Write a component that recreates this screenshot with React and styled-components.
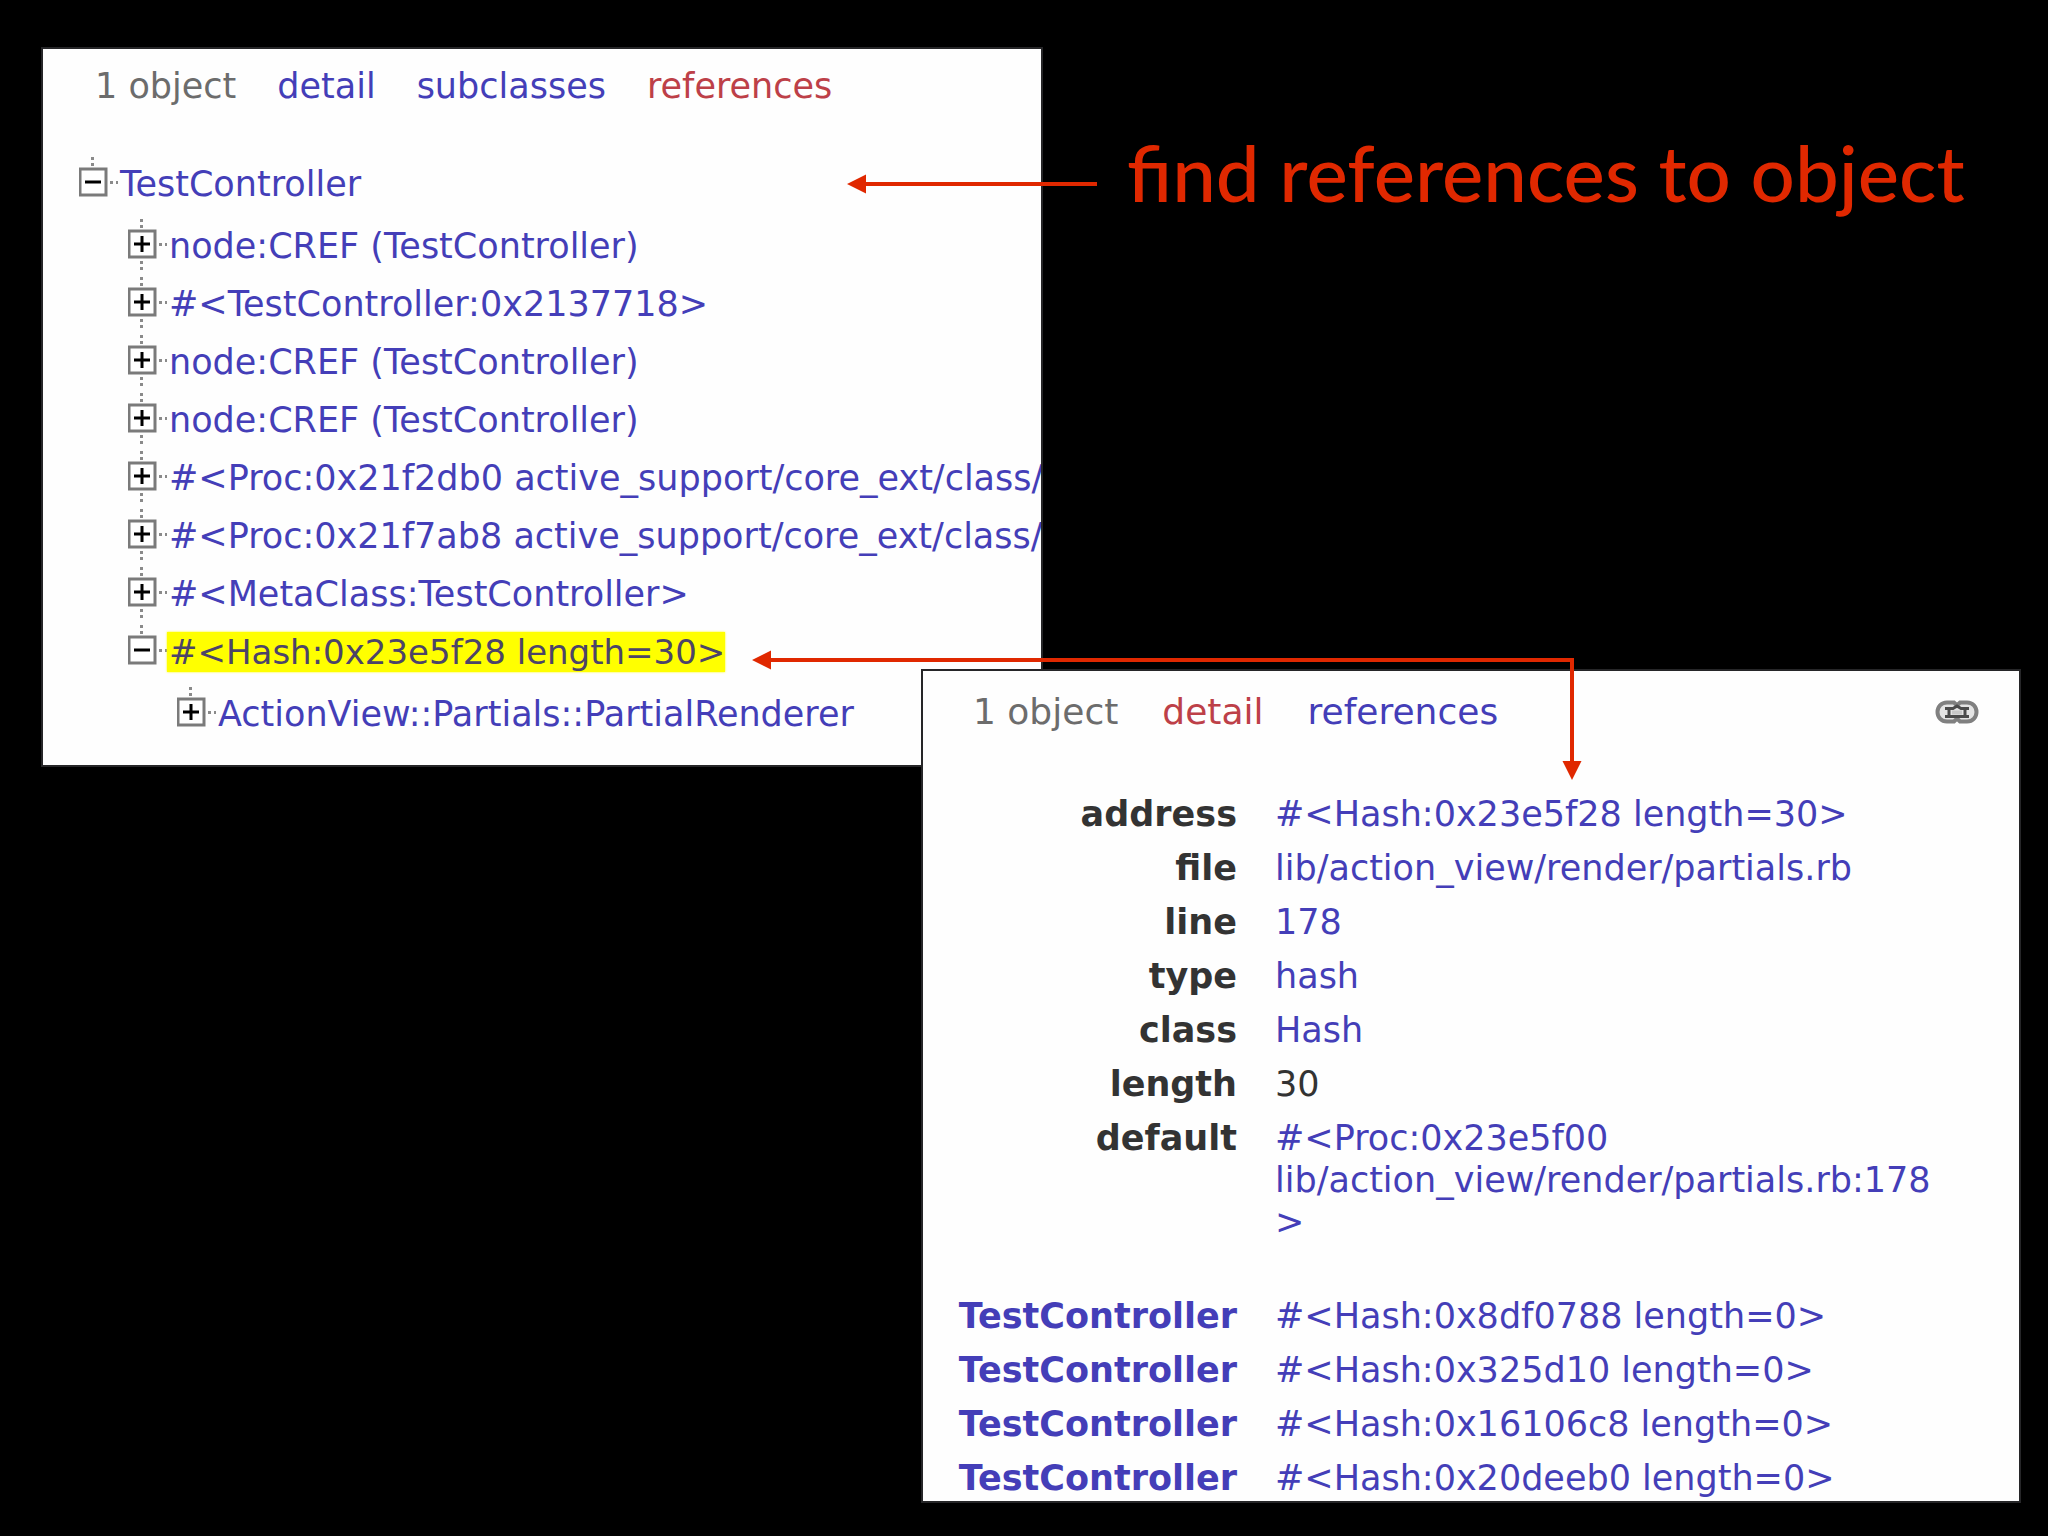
import React from 'react';
import styled, { createGlobalStyle } from 'styled-components';

const treeRows = [
  { label: 'node:CREF (TestController)' },
  { label: '#<TestController:0x2137718>' },
  { label: 'node:CREF (TestController)' },
  { label: 'node:CREF (TestController)' },
  { label: '#<Proc:0x21f2db0 active_support/core_ext/class/' },
  { label: '#<Proc:0x21f7ab8 active_support/core_ext/class/' },
  { label: '#<MetaClass:TestController>' },
  {
    label: '#<Hash:0x23e5f28 length=30>',
    open: true,
    marked: true,
    children: [{ label: 'ActionView::Partials::PartialRenderer' }],
  },
];

const tree = [{ label: 'TestController', open: true, children: treeRows }];

const details = [
  { name: 'address', value: '#<Hash:0x23e5f28 length=30>' },
  { name: 'file', value: 'lib/action_view/render/partials.rb' },
  { name: 'line', value: '178' },
  { name: 'type', value: 'hash' },
  { name: 'class', value: 'Hash' },
  { name: 'length', value: '30', plain: true },
  { name: 'default', value: '#<Proc:0x23e5f00\nlib/action_view/render/partials.rb:178\n>' },
];

const entries = [
  '#<Hash:0x8df0788 length=0>',
  '#<Hash:0x325d10 length=0>',
  '#<Hash:0x16106c8 length=0>',
  '#<Hash:0x20deeb0 length=0>',
];

function ToggleIcon({ open, last }) {
  return (
    <svg width="39" height="58" viewBox="0 0 39 58" aria-hidden="true">
      <g fill="#8a8a8a">
        <rect x="12" y="2" width="3" height="3" />
        <rect x="12" y="8" width="3" height="3" />
        <rect x="31" y="26" width="3" height="3" />
        <rect x="37" y="26" width="2" height="3" />
        {!last && <rect x="12" y="44" width="3" height="3" />}
        {!last && <rect x="12" y="50" width="3" height="3" />}
      </g>
      <rect x="1" y="14" width="26" height="26" fill="#fff" stroke="#7a7a7a" strokeWidth="3" />
      <path d={open ? 'M6 27h16' : 'M6 27h16M14 19v16'} stroke="#000" strokeWidth="3" />
    </svg>
  );
}

function LinkIcon() {
  return (
    <svg width="44" height="24" viewBox="0 0 44 24" fill="none" aria-hidden="true">
      <path
        d="M19 2.500H12C6 2.500 2.500 7 2.500 12S6 21.500 12 21.500H19L22 18.500L25 21.500H32C38 21.500 41.500 17 41.500 12S38 2.500 32 2.500H25L22 5.500Z"
        fill="#e4e4e4"
        stroke="#808080"
        strokeWidth="4"
      />
      <path d="M10 8.500H18L22 6L26 8.500H34M10 16.500H34M14 8V16M30 8V16" stroke="#4c4c4c" strokeWidth="3" />
      <path d="M17 12.500H27" stroke="#c8c8c8" strokeWidth="4" />
    </svg>
  );
}

function Branch({ nodes }) {
  return (
    <BranchList>
      {nodes.map((node, i) => (
        <li key={i}>
          <TreeRow>
            <ToggleButton type="button" aria-expanded={!!node.open} aria-label={`Toggle ${node.label}`}>
              <ToggleIcon open={node.open} last={i === nodes.length - 1} />
            </ToggleButton>
            <NodeLink href="#" $marked={node.marked}>{node.label}</NodeLink>
          </TreeRow>
          {node.children && <Branch nodes={node.children} />}
        </li>
      ))}
    </BranchList>
  );
}

function App() {
  return (
    <Slide>
      <GlobalStyle />

      <TreePanel>
        <Tabs>
          <Count>1 object</Count>
          <Tab href="#">detail</Tab>
          <Tab href="#">subclasses</Tab>
          <Tab href="#" $active>references</Tab>
        </Tabs>
        <Tree>
          <Branch nodes={tree} />
        </Tree>
      </TreePanel>

      <Caption>find references to object</Caption>

      <DetailPanel>
        <Tabs $large>
          <Count>1 object</Count>
          <Tab href="#" $active>detail</Tab>
          <Tab href="#">references</Tab>
          <Permalink href="#" aria-label="Permalink">
            <LinkIcon />
          </Permalink>
        </Tabs>
        <DetailTable>
          <tbody>
            {details.map(({ name, value, plain }) => (
              <tr key={name}>
                <Name scope="row">{name}</Name>
                <Value>{plain ? value : <TextLink href="#">{value}</TextLink>}</Value>
              </tr>
            ))}
          </tbody>
          <Entries>
            {entries.map(entry => (
              <tr key={entry}>
                <Name scope="row"><TextLink href="#">TestController</TextLink></Name>
                <Value><TextLink href="#">{entry}</TextLink></Value>
              </tr>
            ))}
          </Entries>
        </DetailTable>
      </DetailPanel>

      <Arrows viewBox="0 0 2048 1536" preserveAspectRatio="none" aria-hidden="true">
        <path d="M1097 184H864M770 660H1572V763" fill="none" stroke="#e02800" strokeWidth="4" />
        <path d="M847 184L866 174.500V193.500ZM752 660L771 650.500V669.500ZM1572 780L1562.500 761H1581.500Z" fill="#e02800" />
      </Arrows>
    </Slide>
  );
}

export default App;


// Styled Components
const GlobalStyle = createGlobalStyle`
  body {
    margin: 0;
    background: #000;
  }

  * {
    box-sizing: border-box;
  }
`;

const Slide = styled.main`
  position: relative;
  display: grid;
  grid-template-columns: 41fr 880fr 122fr 978fr 27fr;
  grid-template-rows: 47fr 622fr 98fr 736fr 33fr;
  min-height: 100vh;
  background: #000;
  color: #333;
  font-family: 'DejaVu Sans', Verdana, sans-serif;
  font-size: 35px;
`;

const Panel = styled.section`
  overflow: hidden;
  border: 2px solid #262628;
  background: #fefefe;
`;

const TreePanel = styled(Panel)`
  grid-area: 2 / 2 / 4 / 4;
  padding: 17px 0 0 36px;
`;

const DetailPanel = styled(Panel)`
  grid-area: 3 / 3 / 5 / 5;
  padding: 21px 40px 0 34px;
`;

const Tabs = styled.nav`
  display: flex;
  align-items: center;
  gap: ${({ $large }) => ($large ? '44px' : '41px')};
  padding-left: 16px;
  font-size: ${({ $large }) => ($large ? '36px' : '35px')};
  line-height: 40px;
`;

const Count = styled.span`
  color: #6c6c6c;
`;

const TextLink = styled.a`
  color: #443eb8;
  text-decoration: none;
`;

const Tab = styled(TextLink)`
  color: ${({ $active }) => ($active ? '#bd4048' : '#443eb8')};
`;

const Permalink = styled.a`
  display: flex;
  margin-left: auto;
`;

const BranchList = styled.ul`
  margin: 0;
  padding: 0;
  list-style: none;

  & & {
    margin-top: 4px;
    padding-left: 49px;
  }
`;

const Tree = styled.div`
  margin-top: 49px;
`;

const TreeRow = styled.div`
  display: flex;
  align-items: center;
  height: 58px;
  white-space: nowrap;
`;

const ToggleButton = styled.button`
  display: flex;
  flex: none;
  padding: 0;
  border: none;
  background: none;
  cursor: pointer;
`;

const NodeLink = styled(TextLink)`
  padding-left: 2px;
  line-height: 40px;
  ${({ $marked }) => $marked && `
    background: #ff0;
    color: #4c4468;
    font-size: 34px;
    box-shadow: 0 0 2px #ff0;
  `}
`;

const Caption = styled.h1`
  grid-area: 1 / 4 / 3 / 6;
  margin: 0;
  padding: 122px 0 0 84px;
  color: #e02800;
  font-family: Lato, sans-serif;
  font-size: 78px;
  font-weight: 500;
  line-height: 100px;
  white-space: nowrap;
`;

const DetailTable = styled.table`
  width: 100%;
  margin-top: 49px;
  border-collapse: collapse;
  line-height: 42px;
`;

const Name = styled.th`
  width: 280px;
  padding: 12px 0 0;
  color: #333;
  font-weight: 700;
  text-align: right;
  vertical-align: top;
`;

const Value = styled.td`
  padding: 12px 0 0 38px;
  white-space: pre;
  vertical-align: top;
`;

const Entries = styled.tbody`
  &::before {
    content: '';
    display: block;
    height: 40px;
  }
`;

const Arrows = styled.svg`
  position: absolute;
  inset: 0;
  width: 100%;
  height: 100%;
  pointer-events: none;
`;
